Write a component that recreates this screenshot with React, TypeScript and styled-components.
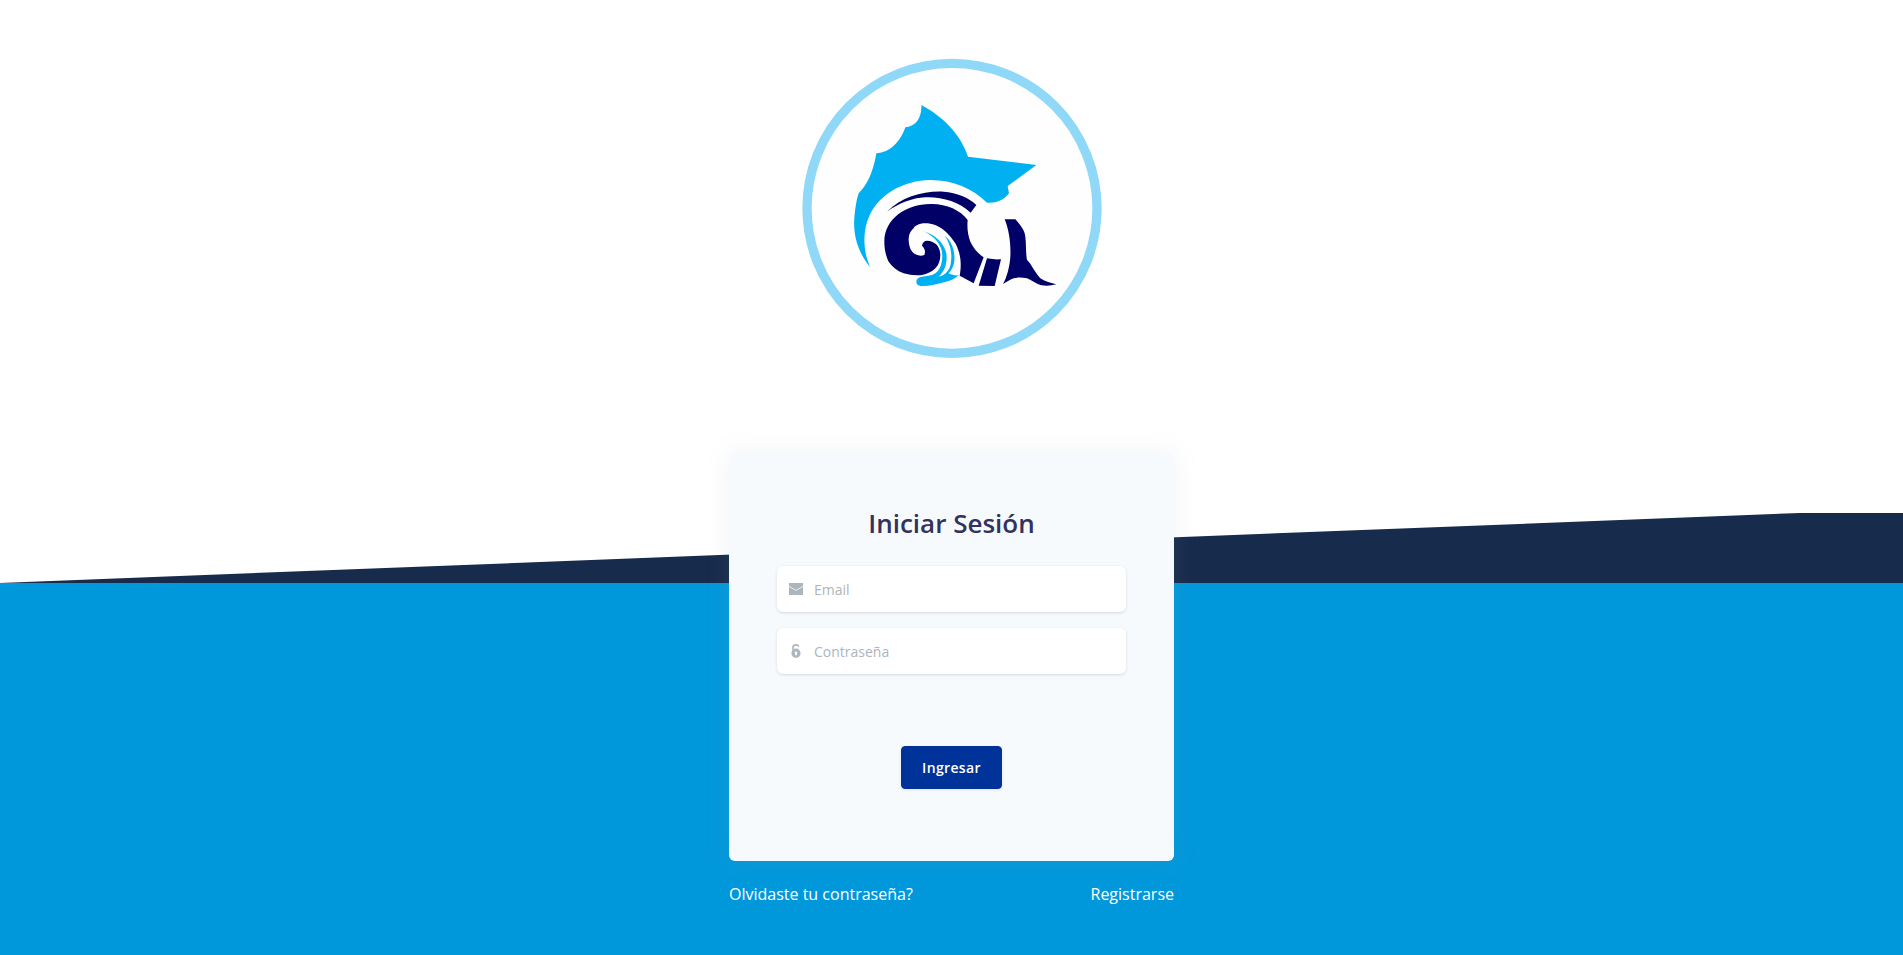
import React from "react";
import styled, { createGlobalStyle } from "styled-components";

const Global = createGlobalStyle`
  html, body { margin: 0; padding: 0; height: 100%; }
  body { font-family: "Open Sans", "Liberation Sans", sans-serif; background: #fff; overflow: hidden; }
  * { box-sizing: border-box; }
`;

const Page = styled.div`
  min-height: 955px;
  display: flex;
  flex-direction: column;
`;

const Header = styled.header`
  position: relative;
  height: 583px;
  padding-top: 50px;
  display: flex;
  justify-content: center;
  background: #fff;
`;

const Wave = styled.div`
  position: absolute;
  left: 0;
  right: 0;
  bottom: 0;
  height: 70px;
  background: #172b4d;
  clip-path: polygon(0 100%, 94.6% 0, 100% 0, 100% 100%);
`;

const Main = styled.main`
  flex: 1;
  background: #0098db;
  display: flex;
  flex-direction: column;
  align-items: center;
`;

const Column = styled.div`
  position: relative;
  width: 445px;
  margin-top: -130px;
`;

const Card = styled.form`
  height: 408px;
  padding: 48px;
  background: #f7fafc;
  border-radius: 6px;
  box-shadow: 0 0 24px rgba(136, 152, 170, 0.13);
  display: flex;
  flex-direction: column;
`;

const Title = styled.h1`
  margin: 4px 0 25px;
  font-size: 26px;
  line-height: 36px;
  font-weight: 600;
  color: #32325d;
  text-align: center;
`;

const Field = styled.label`
  height: 46px;
  margin-bottom: 16px;
  display: flex;
  align-items: center;
  background: #fff;
  border-radius: 6px;
  box-shadow: 0 1px 3px rgba(50, 50, 93, 0.15), 0 1px 0 rgba(0, 0, 0, 0.02);
`;

const IconSlot = styled.span`
  width: 37px;
  flex: none;
  display: flex;
  justify-content: center;
  padding-left: 1px;
  color: #adb5bd;
`;

const TextInput = styled.input`
  flex: 1;
  min-width: 0;
  height: 100%;
  border: 0;
  outline: 0;
  padding: 0;
  background: transparent;
  font-family: inherit;
  font-size: 14px;
  color: #32325d;
  &::placeholder { color: #adb5bd; opacity: 1; }
`;

const ButtonRow = styled.div`
  margin-top: 56px;
  display: flex;
  justify-content: center;
`;

const Submit = styled.button`
  width: 101px;
  height: 43px;
  padding: 0;
  border: 1px solid #003399;
  border-radius: 4px;
  background: #003399;
  color: #fff;
  font-family: inherit;
  font-size: 14px;
  font-weight: 600;
  letter-spacing: 0.35px;
  box-shadow: 0 1px 3px rgba(50, 50, 93, 0.11);
`;

const Links = styled.nav`
  margin-top: 21px;
  display: flex;
  justify-content: space-between;
`;

const FooterLink = styled.a`
  color: #fff;
  font-size: 16px;
  line-height: 24px;
  text-decoration: none;
`;

const Logo = () => (
  <svg width="320" height="320" viewBox="5 0 960 960" aria-label="Logo">
    <circle cx="485" cy="475" r="435" fill="#fefefe" stroke="#90d8f8" strokeWidth="28" />
    <path
      fill="#00b0f0"
      d="M393 165 C455 198 510 250 533 320 L738 345 L652 408 L656 430 C640 452 615 460 590 458 C545 415 490 390 420 390 C340 392 270 430 238 495 C215 545 218 605 240 652 C205 610 188 560 192 505 C194 480 198 450 205 430 C232 405 250 360 258 310 C300 308 330 275 345 232 C375 230 395 205 393 165 Z"
    />
    <path
      fill="#000066"
      d="M290 485 C335 440 400 422 460 425 C500 428 535 442 558 465 L541 488 C505 455 455 440 405 442 C365 444 325 460 290 485 Z"
    />
    <path
      fill="#000066"
      d="M282 575 C282 505 350 460 425 462 C470 463 510 480 532 510 C530 535 532 552 540 575 C550 595 562 610 580 622 L550 700 L508 677 C513 650 514 615 495 580 C482 560 472 550 460 540 C445 528 425 520 405 520 C385 520 372 528 370 535 C358 545 355 558 355 570 C356 592 362 605 375 613 C385 618 395 618 402 615 C406 605 404 595 395 587 C396 578 402 572 410 572 C422 572 432 577 440 585 C447 595 450 605 450 615 C450 632 445 645 435 655 C425 666 410 672 395 675 C375 677 358 675 340 670 C320 662 305 650 295 635 C287 620 282 597 282 575 Z"
    />
    <path fill="#000066" d="M590 625 C605 628 618 629 632 628 L613 708 L565 707 Z" />
    <path
      fill="#000066"
      d="M643 508 L675 508 C690 525 703 540 705 560 C708 585 706 610 710 630 C722 640 732 665 750 685 C765 695 782 700 798 703 C780 708 765 708 750 705 C735 700 722 690 710 685 C695 682 680 682 670 685 C658 690 648 697 638 702 C650 680 658 650 660 620 C662 580 656 540 643 508 Z"
    />
    <path
      fill="#00b0f0"
      d="M398 543 C430 552 462 578 468 610 C472 640 462 665 445 680 C465 675 480 660 482 635 C486 605 478 578 463 557 C480 570 490 590 492 615 C494 640 488 655 475 670 C485 675 495 677 505 676 C490 690 470 695 450 700 C430 705 410 709 395 708 C382 707 378 702 378 695 C378 687 385 681 395 680 C408 679 420 677 430 673 C440 668 448 658 452 645 C458 625 457 605 450 590 C440 568 420 553 398 543 Z"
    />
  </svg>
);

const EnvelopeIcon = () => (
  <svg width="14" height="12" viewBox="0 0 14 12" aria-hidden="true">
    <path fill="currentColor" d="M0 0H14V3L7 6.9L0 3ZM0 3.8L7 7.7L14 3.8V12H0Z" />
  </svg>
);

const LockIcon = () => (
  <svg width="10" height="14" viewBox="0 0 10 14" aria-hidden="true">
    <path fill="none" stroke="currentColor" strokeWidth="1.6" d="M2 6.5V3.4C2 1.9 3.3 .9 5 .9C6.4 .9 7.4 1.5 7.8 2.6" />
    <path fill="currentColor" fillRule="evenodd" d="M5 4.6A4.6 4.6 0 1 1 5 13.8A4.6 4.6 0 1 1 5 4.6ZM5 7.4A1.4 1.4 0 0 0 4.1 9.8V11.2H5.9V9.8A1.4 1.4 0 0 0 5 7.4Z" />
  </svg>
);

export default function App() {
  return (
    <Page>
      <Global />
      <Header>
        <Logo />
        <Wave />
      </Header>
      <Main>
        <Column>
          <Card onSubmit={(e) => e.preventDefault()}>
            <Title>Iniciar Sesión</Title>
            <Field>
              <IconSlot><EnvelopeIcon /></IconSlot>
              <TextInput type="email" placeholder="Email" />
            </Field>
            <Field>
              <IconSlot><LockIcon /></IconSlot>
              <TextInput type="password" placeholder="Contraseña" />
            </Field>
            <ButtonRow>
              <Submit type="submit">Ingresar</Submit>
            </ButtonRow>
          </Card>
          <Links>
            <FooterLink href="#">Olvidaste tu contraseña?</FooterLink>
            <FooterLink href="#">Registrarse</FooterLink>
          </Links>
        </Column>
      </Main>
    </Page>
  );
}
